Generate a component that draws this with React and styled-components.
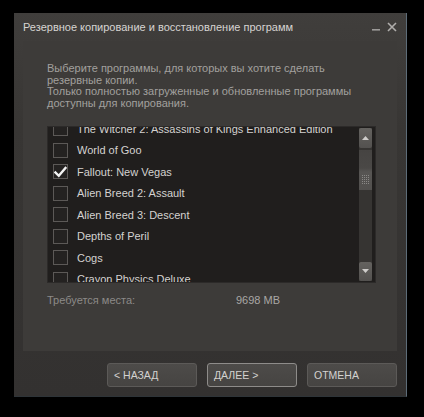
import React from "react";
import styled, { createGlobalStyle } from "styled-components";

const Global = createGlobalStyle`
  html, body { margin: 0; padding: 0; background: #000; }
  body {
    font-family: "Liberation Sans", Arial, sans-serif;
    -webkit-font-smoothing: antialiased;
  }
`;

const Stage = styled.div`
  width: 424px;
  height: 417px;
  padding: 13px 0 0 14px;
  box-sizing: border-box;
  background: #000;
`;

const Window = styled.div`
  width: 393px;
  height: 384px;
  box-sizing: border-box;
  display: flex;
  flex-direction: column;
  background: linear-gradient(#403e3c 0%, #383634 30%, #333130 100%);
  border-right: 1px solid #5d6c78;
  border-bottom: 1px solid #2e3438;
`;

const TitleBar = styled.div`
  height: 27px;
  flex: none;
  display: flex;
  align-items: center;
  padding: 0 9px 0 9px;
  color: #d6d4d2;
  font-size: 11px;
`;

const Title = styled.div`
  flex: 1;
`;

const WinControls = styled.div`
  display: flex;
  align-items: center;
  gap: 7px;
`;

const Panel = styled.div`
  margin: 1px 9px 0;
  height: 310px;
  box-sizing: border-box;
  background: #3d3b39;
  padding: 22px 21px 0 24px;
  display: flex;
  flex-direction: column;
`;

const Intro = styled.p`
  margin: 0;
  font-size: 11px;
  line-height: 11.7px;
  color: #a2a09e;
`;

const ListBox = styled.div`
  margin-top: 16px;
  height: 157px;
  box-sizing: border-box;
  background: #201e1d;
  border: 1px solid #2c2a29;
  display: flex;
  overflow: hidden;
`;

const Rows = styled.div`
  flex: 1;
  overflow: hidden;
`;

const RowsInner = styled.div`
  margin-top: -9px;
  display: flex;
  flex-direction: column;
`;

const Row = styled.div`
  height: 21.5px;
  display: flex;
  align-items: center;
  padding-left: 5px;
  gap: 9px;
  color: #d4d2d0;
  font-size: 11px;
  white-space: nowrap;
`;

const Box = styled.div`
  width: 15px;
  height: 15px;
  box-sizing: border-box;
  border: 1px solid #5c5957;
  background: #242221;
  display: flex;
  align-items: center;
  justify-content: center;
  flex: none;
`;

const ScrollBar = styled.div`
  width: 13px;
  margin: 1px 3px 1px 0;
  display: flex;
  flex-direction: column;
  background: #363432;
`;

const ArrowBtn = styled.div`
  height: ${(p) => p.$h}px;
  flex: none;
  background: linear-gradient(#64625f, #53514f);
  border-radius: 2px;
  display: flex;
  align-items: center;
  justify-content: center;
`;

const Track = styled.div`
  flex: 1;
  display: flex;
  flex-direction: column;
  padding-top: 2px;
`;

const Thumb = styled.div`
  height: 40px;
  background: linear-gradient(#464442 0%, #4a4846 45%, #575553 55%, #52504e 100%);
  display: flex;
  align-items: flex-end;
  justify-content: center;
  padding-bottom: 6px;
  box-sizing: border-box;
`;

const Info = styled.div`
  margin-top: 11px;
  display: flex;
  font-size: 11px;
  color: #8c8a88;
`;

const InfoLabel = styled.span`
  width: 189px;
`;

const InfoValue = styled.span`
  color: #a9a7a5;
`;

const Footer = styled.div`
  flex: 1;
  display: flex;
  justify-content: flex-end;
  align-items: flex-start;
  gap: 10px;
  padding: 12px 9px 0 0;
`;

const Button = styled.div`
  width: 90px;
  height: 24px;
  box-sizing: border-box;
  border-radius: 3px;
  border: 1px solid ${(p) => (p.$focus ? "#8e8c8a" : "#5c5a58")};
  background: linear-gradient(#4d4b49, #464442);
  color: #d4d2d0;
  font-size: 10.5px;
  display: flex;
  align-items: center;
  padding-left: 6px;
`;

const games = [
  "The Witcher 2: Assassins of Kings Enhanced Edition",
  "World of Goo",
  "Fallout: New Vegas",
  "Alien Breed 2: Assault",
  "Alien Breed 3: Descent",
  "Depths of Peril",
  "Cogs",
  "Crayon Physics Deluxe",
];

const Check = () => (
  <svg width="13" height="12" viewBox="0 0 13 12">
    <path d="M1.5 6.5 L4.8 9.8 L11.5 2" fill="none" stroke="#f4f4f4" strokeWidth="2.4" strokeLinecap="square" />
  </svg>
);

const Tri = ({ down }) => (
  <svg width="7" height="4" viewBox="0 0 7 4">
    <path d={down ? "M0 0 H7 L3.5 4 Z" : "M0 4 H7 L3.5 0 Z"} fill="#cfcdcb" />
  </svg>
);

const Grip = () => (
  <svg width="7" height="9" viewBox="0 0 7 9">
    {[0, 2, 4, 6, 8].map((y) =>
      [0, 2, 4, 6].map((x) => <rect key={`${x}-${y}`} x={x} y={y} width="1" height="1" fill="#8a8886" />)
    )}
  </svg>
);

export default function App() {
  return (
    <>
      <Global />
      <Stage>
        <Window>
          <TitleBar>
            <Title>Резервное копирование и восстановление программ</Title>
            <WinControls>
              <svg width="8" height="9" viewBox="0 0 8 9">
                <rect x="0" y="7" width="8" height="1.6" fill="#9c9a98" />
              </svg>
              <svg width="10" height="10" viewBox="0 0 10 10">
                <path d="M1 1 L9 9 M9 1 L1 9" stroke="#b0aeac" strokeWidth="1.6" />
              </svg>
            </WinControls>
          </TitleBar>
          <Panel>
            <Intro>
              Выберите программы, для которых вы хотите сделать
              <br />
              резервные копии.
              <br />
              Только полностью загруженные и обновленные программы
              <br />
              доступны для копирования.
            </Intro>
            <ListBox>
              <Rows>
                <RowsInner>
                  {games.map((g, i) => (
                    <Row key={g}>
                      <Box>{i === 2 && <Check />}</Box>
                      {g}
                    </Row>
                  ))}
                </RowsInner>
              </Rows>
              <ScrollBar>
                <ArrowBtn $h={20}>
                  <Tri />
                </ArrowBtn>
                <Track>
                  <Thumb>
                    <Grip />
                  </Thumb>
                </Track>
                <ArrowBtn $h={19}>
                  <Tri down />
                </ArrowBtn>
              </ScrollBar>
            </ListBox>
            <Info>
              <InfoLabel>Требуется места:</InfoLabel>
              <InfoValue>9698 MB</InfoValue>
            </Info>
          </Panel>
          <Footer>
            <Button>&lt; НАЗАД</Button>
            <Button $focus>ДАЛЕЕ &gt;</Button>
            <Button>ОТМЕНА</Button>
          </Footer>
        </Window>
      </Stage>
    </>
  );
}
